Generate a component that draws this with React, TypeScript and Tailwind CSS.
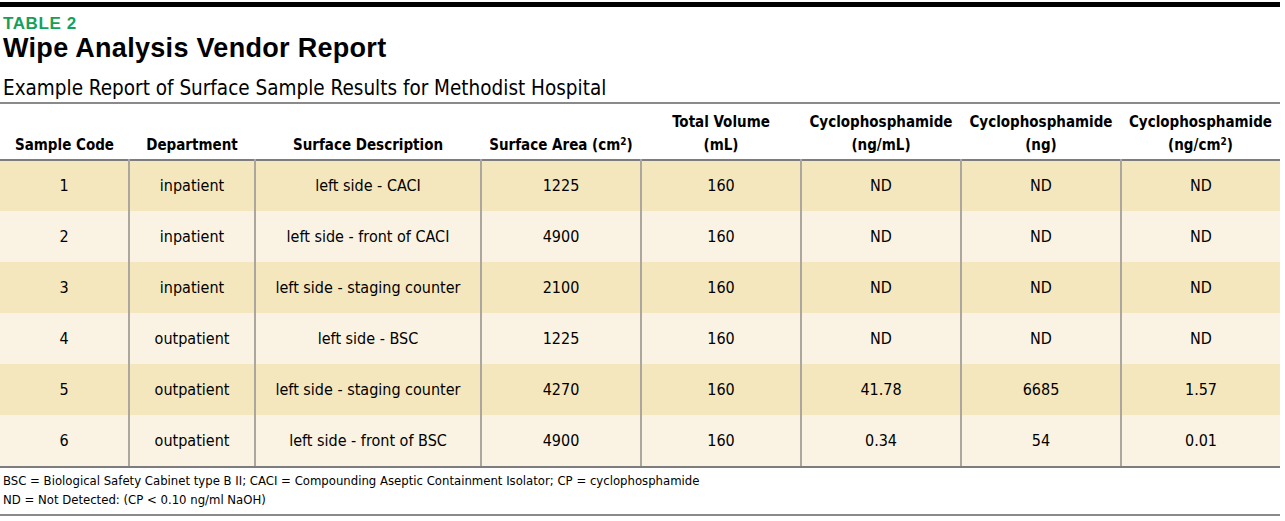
const rows = [
  ["1", "inpatient", "left side - CACI", "1225", "160", "ND", "ND", "ND"],
  ["2", "inpatient", "left side - front of CACI", "4900", "160", "ND", "ND", "ND"],
  ["3", "inpatient", "left side - staging counter", "2100", "160", "ND", "ND", "ND"],
  ["4", "outpatient", "left side - BSC", "1225", "160", "ND", "ND", "ND"],
  ["5", "outpatient", "left side - staging counter", "4270", "160", "41.78", "6685", "1.57"],
  ["6", "outpatient", "left side - front of BSC", "4900", "160", "0.34", "54", "0.01"],
];

const widths = [129, 126, 226, 160, 160, 160, 160, 159];

export default function App() {
  return (
    <div className="w-[1285px] h-[521px] bg-white text-black overflow-hidden font-['DejaVu_Sans',sans-serif] [font-stretch:condensed]">
      <div className="w-[1280px] pt-[2px]">
        <div className="h-[5px] bg-black" />
        <div className="pl-[3px] pt-[8px] font-['Liberation_Sans',sans-serif] [font-stretch:normal] font-bold text-[17px] leading-[18px] text-[#15a05a] tracking-[0.6px]">
          TABLE 2
        </div>
        <div className="pl-[3px] pt-0 font-['Liberation_Sans',sans-serif] [font-stretch:normal] font-bold text-[27px] leading-[30px] tracking-[0.3px]">
          Wipe Analysis Vendor Report
        </div>
        <div className="pl-[3px] pt-[12px] text-[20.5px] leading-[26px]">
          Example Report of Surface Sample Results for Methodist Hospital
        </div>
        <div className="mt-[1px] h-[2px] bg-[#8a8a8a]" />

        <table className="w-[1280px] table-fixed border-collapse text-[16px]">
          <colgroup>
            {widths.map((w, i) => (
              <col key={i} style={{ width: w }} />
            ))}
          </colgroup>
          <thead>
            <tr className="h-[56px] border-b-2 border-[#7d7d7d] text-[15px]">
              <th className="align-bottom pb-[2px] font-bold leading-[23px]">Sample Code</th>
              <th className="align-bottom pb-[2px] font-bold leading-[23px]">Department</th>
              <th className="align-bottom pb-[2px] font-bold leading-[23px]">Surface Description</th>
              <th className="align-bottom pb-[2px] font-bold leading-[23px] whitespace-nowrap">
                Surface Area (cm<sup className="text-[10px]">2</sup>)
              </th>
              <th className="align-bottom pb-[2px] font-bold leading-[23px]">
                Total Volume
                <br />
                (mL)
              </th>
              <th className="align-bottom pb-[2px] font-bold leading-[23px]">
                Cyclophosphamide
                <br />
                (ng/mL)
              </th>
              <th className="align-bottom pb-[2px] font-bold leading-[23px]">
                Cyclophosphamide
                <br />
                (ng)
              </th>
              <th className="align-bottom pb-[2px] font-bold leading-[23px]">
                Cyclophosphamide
                <br />
                (ng/cm<sup className="text-[10px]">2</sup>)
              </th>
            </tr>
          </thead>
          <tbody>
            {rows.map((r, i) => (
              <tr key={i} className={i % 2 === 0 ? "h-[51px] bg-[#f5e7bd]" : "h-[51px] bg-[#faf3e3]"}>
                {r.map((c, j) => (
                  <td
                    key={j}
                    className={
                      j < r.length - 1
                        ? "text-center align-middle border-r-2 border-[#aba79e]"
                        : "text-center align-middle"
                    }
                  >
                    {c}
                  </td>
                ))}
              </tr>
            ))}
          </tbody>
        </table>
        <div className="h-[2px] bg-[#7d7d7d]" />
        <div className="pl-[3px] pt-[3px] text-[13px] leading-[19px]">
          <div>BSC = Biological Safety Cabinet type B II; CACI = Compounding Aseptic Containment Isolator; CP = cyclophosphamide</div>
          <div>ND = Not Detected: (CP &lt; 0.10 ng/ml NaOH)</div>
        </div>
        <div className="mt-[5px] h-[2px] bg-[#8a8a8a]" />
      </div>
    </div>
  );
}
